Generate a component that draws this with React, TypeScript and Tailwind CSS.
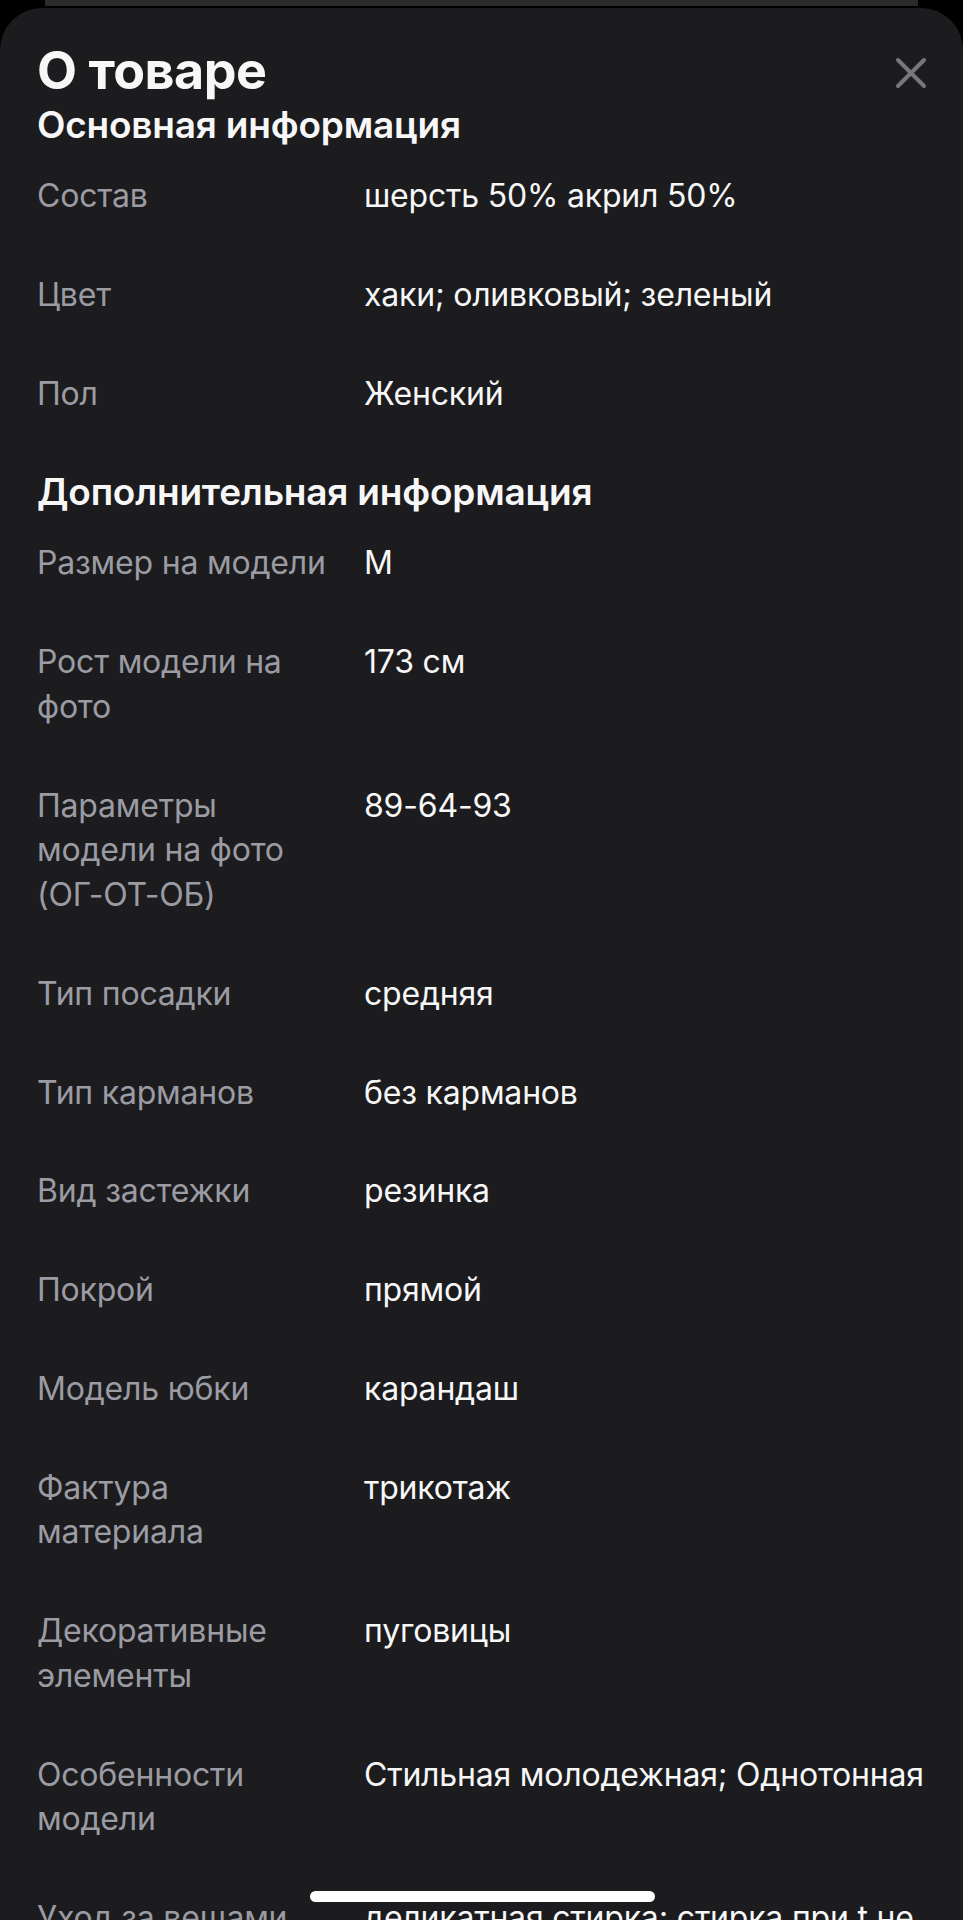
type Row = { label: string; value: string };

const mainInfo: Row[] = [
  { label: "Состав", value: "шерсть 50% акрил 50%" },
  { label: "Цвет", value: "хаки; оливковый; зеленый" },
  { label: "Пол", value: "Женский" },
];

const extraInfo: Row[] = [
  { label: "Размер на модели", value: "M" },
  { label: "Рост модели на фото", value: "173 см" },
  { label: "Параметры модели на фото (ОГ-ОТ-ОБ)", value: "89-64-93" },
  { label: "Тип посадки", value: "средняя" },
  { label: "Тип карманов", value: "без карманов" },
  { label: "Вид застежки", value: "резинка" },
  { label: "Покрой", value: "прямой" },
  { label: "Модель юбки", value: "карандаш" },
  { label: "Фактура материала", value: "трикотаж" },
  { label: "Декоративные элементы", value: "пуговицы" },
  { label: "Особенности модели", value: "Стильная молодежная; Однотонная" },
  { label: "Уход за вещами", value: "деликатная стирка; стирка при t не более 30°C" },
];

function InfoRows({ rows }: { rows: Row[] }) {
  return (
    <div className="flex flex-col">
      {rows.map((row) => (
        <div
          key={row.label}
          className="grid grid-cols-[305px_1fr] gap-x-[22px] py-[27px] text-[32px] leading-[44.75px] tracking-[-0.2px]"
        >
          <span className="text-[#9b9ba3]">{row.label}</span>
          <span className="text-[#f7f7f8]">{row.value}</span>
        </div>
      ))}
    </div>
  );
}

export default function App() {
  return (
    <div
      className="relative h-[1920px] w-full overflow-hidden bg-black"
      style={{ fontFamily: "Inter, 'Noto Sans', sans-serif" }}
    >
      <div className="mx-[45px] h-[6px] bg-[#2b2b2e]" />
      <div className="mt-[2px] rounded-t-[42px] bg-[#1c1c1f] px-[37px] pt-[35px]">
        <div className="flex items-start justify-between">
          <h1 className="text-[52px] font-bold leading-[56px] tracking-[-0.5px] text-[#f7f7f8]">О товаре</h1>
          <button className="mt-[14px] mr-[-1px] text-[#77777d]">
            <svg width="32" height="32" viewBox="0 0 32 32" fill="none" stroke="currentColor" strokeWidth="4" strokeLinecap="round">
              <path d="M3 3L29 29M29 3L3 29" />
            </svg>
          </button>
        </div>
        <h2 className="mt-[4px] text-[37px] font-semibold leading-[44px] tracking-[-0.2px] text-[#f7f7f8]">Основная информация</h2>
        <InfoRows rows={mainInfo} />
        <h2 className="pt-[27px] text-[37px] font-semibold leading-[44px] tracking-[-0.2px] text-[#f7f7f8]">Дополнительная информация</h2>
        <InfoRows rows={extraInfo} />
      </div>
      <div className="absolute bottom-[18px] left-[310px] h-[11px] w-[345px] rounded-full bg-white" />
    </div>
  );
}
